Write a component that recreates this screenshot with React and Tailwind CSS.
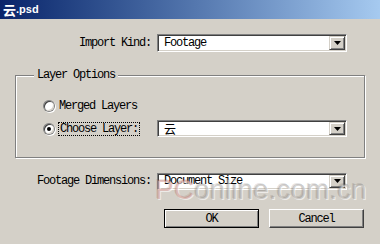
import React from "react";

const mono = { fontFamily: "'Liberation Mono', 'Noto Sans CJK SC', monospace" };

function Arrow() {
  return (
    <div className="w-[16px] h-full bg-[#d4d0c8] border border-t-[#d4d0c8] border-l-[#d4d0c8] border-r-[#404040] border-b-[#404040] shadow-[inset_1px_1px_0_#fff,inset_-1px_-1px_0_#808080] flex items-center justify-center">
      <svg width="7" height="4" viewBox="0 0 7 4">
        <path d="M0 0h7L3.5 4z" fill="#000" />
      </svg>
    </div>
  );
}

function Select({ value, h, cjk }) {
  return (
    <div
      className={`w-[190px] ${h} bg-white border border-t-[#808080] border-l-[#808080] border-r-white border-b-white shadow-[inset_1px_1px_0_#404040,inset_-1px_-1px_0_#d4d0c8] flex items-stretch p-[1px]`}
    >
      <div
        className="flex-1 flex items-center pl-[5px] text-[12px] tracking-[-1.2px] text-black leading-none"
        style={cjk ? { fontFamily: "'Noto Sans CJK SC', sans-serif", fontSize: 12, letterSpacing: 0 } : mono}
      >
        {value}
      </div>
      <Arrow />
    </div>
  );
}

function Radio({ checked }) {
  return (
    <div className="w-[12px] h-[12px] rounded-full bg-[#808080] p-[1px] shadow-[1px_1px_0_#fff] flex">
      <div className="flex-1 rounded-full bg-white shadow-[inset_1px_1px_0_#404040,inset_-1px_-1px_0_#d4d0c8] flex items-center justify-center">
        {checked && <div className="w-[4px] h-[4px] rounded-full bg-black" />}
      </div>
    </div>
  );
}

export default function App() {
  return (
    <div className="relative w-[380px] h-[244px] bg-[#d4d0c8] overflow-hidden" style={mono}>
      <div className="h-[19px] bg-linear-to-r from-[#0a246a] to-[#a6caf0] flex items-center pl-[3px] text-white font-bold">
        <span style={{ fontFamily: "'Noto Sans CJK SC', sans-serif", fontSize: 13, lineHeight: "13px" }}>云</span>
        <span style={{ fontFamily: "'Liberation Sans', sans-serif", fontSize: 11, lineHeight: "13px" }}>.psd</span>
      </div>

      <div className="mt-[15px] flex items-center text-[12px] tracking-[-1.2px] text-black">
        <div className="w-[151px] text-right">Import Kind:</div>
        <div className="ml-[6px]">
          <Select value="Footage" h="h-[18px]" />
        </div>
      </div>

      <div className="relative mt-[23px] ml-[15px] w-[350px] h-[83px] border border-[#808080] shadow-[inset_1px_1px_0_#fff,1px_1px_0_#fff] pt-[21px] pl-[27px] flex flex-col gap-[6px] text-[12px] tracking-[-1.2px] text-black">
        <div className="absolute left-[18px] top-[-8px] px-[3px] bg-[#d4d0c8] leading-[14px]">Layer Options</div>
        <div className="h-[17px] flex items-center">
          <Radio />
          <span className="ml-[4px]">Merged Layers</span>
        </div>
        <div className="h-[17px] flex items-center">
          <div className="w-[114px] flex items-center">
            <Radio checked />
            <span className="ml-[3px] px-[1px] border border-dotted border-black leading-[12px]">Choose Layer:</span>
          </div>
          <Select value="云" h="h-[17px]" cjk />
        </div>
      </div>

      <div className="mt-[14px] flex items-center text-[12px] tracking-[-1.2px] text-black">
        <div className="w-[151px] text-right">Footage Dimensions:</div>
        <div className="ml-[6px]">
          <Select value="Document Size" h="h-[17px]" />
        </div>
      </div>

      <div className="mt-[19px] flex justify-end gap-[10px] mr-[16px] text-[12px] tracking-[-1.2px] text-black">
        <button className="w-[95px] h-[19px] bg-[#d4d0c8] border border-black shadow-[inset_1px_1px_0_#fff,inset_-1px_-1px_0_#808080] leading-none">OK</button>
        <button className="w-[95px] h-[19px] bg-[#d4d0c8] border border-t-white border-l-white border-r-[#404040] border-b-[#404040] shadow-[inset_-1px_-1px_0_#808080] leading-none">Cancel</button>
      </div>

      <div
        className="absolute left-[155px] top-[176px] pointer-events-none whitespace-nowrap leading-none"
        style={{ fontFamily: "'Liberation Sans', sans-serif", fontSize: 28, letterSpacing: 0 }}
      >
        <span style={{ color: "rgba(200,130,120,0.45)", textShadow: "1px 1px 0 rgba(255,255,255,0.6), -1px -1px 0 rgba(120,60,50,0.15)" }}>PC</span>
        <span style={{ color: "rgba(150,145,140,0.4)", textShadow: "1px 1px 0 rgba(255,255,255,0.6), -1px -1px 0 rgba(60,60,60,0.15)" }}>online.com.cn</span>
      </div>
    </div>
  );
}
